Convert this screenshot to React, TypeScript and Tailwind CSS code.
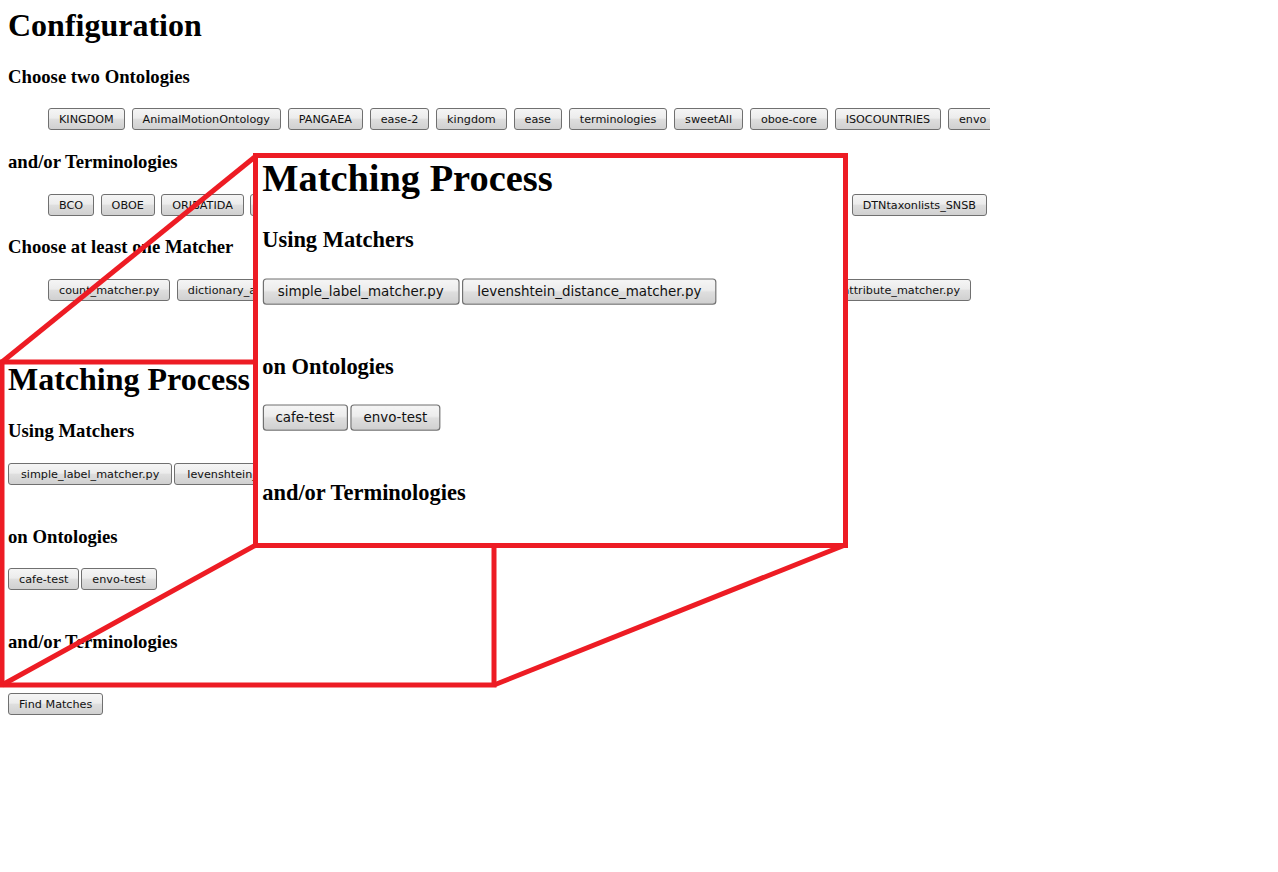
import React from "react";

const RED = "#ed1c24";

const ontologies = [
  "KINGDOM",
  "AnimalMotionOntology",
  "PANGAEA",
  "ease-2",
  "kingdom",
  "ease",
  "terminologies",
  "sweetAll",
  "oboe-core",
  "ISOCOUNTRIES",
  "envo",
];

const Button = ({ label, className = "" }: { label: string; className?: string }) => (
  <button
    className={`h-[22px] shrink-0 whitespace-nowrap rounded-[3px] border border-[#707070] bg-[linear-gradient(to_bottom,#f5f5f5_0%,#ececec_45%,#dedede_52%,#d0d0d0_100%)] px-[10px] pt-[1px] font-['DejaVu_Sans',sans-serif] text-[11.2px] leading-[19px] text-[#111] ${className}`}
  >
    {label}
  </button>
);

const H1 = ({ children }: { children: React.ReactNode }) => (
  <h1 className="text-[32px] font-bold leading-[37px]">{children}</h1>
);

const H3 = ({ children, className = "" }: { children: React.ReactNode; className?: string }) => (
  <h3 className={`text-[18.72px] font-bold leading-[22px] ${className}`}>{children}</h3>
);

const MatchingProcess = () => (
  <div className="h-[325px]">
    <H1>Matching Process</H1>
    <H3 className="mt-[22px]">Using Matchers</H3>
    <div className="mt-[21px] flex gap-[2px]">
      <Button label="simple_label_matcher.py" className="px-[12px]" />
      <Button label="levenshtein_distance_matcher.py" className="px-[12px]" />
    </div>
    <H3 className="mt-[41px]">on Ontologies</H3>
    <div className="mt-[20px] flex gap-[2px]">
      <Button label="cafe-test" />
      <Button label="envo-test" />
    </div>
    <H3 className="mt-[41px]">and/or Terminologies</H3>
  </div>
);

export default function App() {
  return (
    <div className="min-h-screen bg-white">
      <div className="relative h-[872px] w-[990px] overflow-hidden pl-2 pt-[7px] font-['Liberation_Serif',serif] text-black">
        <H1>Configuration</H1>

        <H3 className="mt-[22px]">Choose two Ontologies</H3>
        <div className="mt-[20px] flex gap-[6.8px] pl-10">
          {ontologies.map((o) => (
            <Button key={o} label={o} />
          ))}
        </div>

        <H3 className="mt-[21px]">and/or Terminologies</H3>
        <div className="mt-[21px] flex gap-[6.5px] pl-10 pr-[3px]">
          <Button label="BCO" />
          <Button label="OBOE" />
          <Button label="ORIBATIDA" />
          <Button label="SPECIES" />
          <Button label="DTNtaxonlists_SNSB" className="ml-auto" />
        </div>

        <H3 className="mt-[20px]">Choose at least one Matcher</H3>
        <div className="mt-[21px] flex gap-[6.5px] pl-10 pr-[19px]">
          <Button label="count_matcher.py" />
          <Button label="dictionary_annotation_matcher.py" />
          <Button label="label_attribute_matcher.py" className="ml-auto" />
        </div>

        <section className="mt-[60px]">
          <MatchingProcess />
        </section>

        <div className="mt-[7px] flex">
          <Button label="Find Matches" />
        </div>

        <svg className="pointer-events-none absolute left-0 top-0" width={990} height={872}>
          <rect x={2} y={362} width={492} height={323} fill="none" stroke={RED} strokeWidth={5} />
          <line x1={2} y1={362} x2={256} y2={156} stroke={RED} strokeWidth={5} />
          <line x1={2} y1={685} x2={256} y2={545} stroke={RED} strokeWidth={5} />
          <line x1={494} y1={685} x2={845} y2={545} stroke={RED} strokeWidth={5} />
        </svg>

        <div className="absolute left-[253px] top-[153px] h-[395px] w-[595px] overflow-hidden border-[5px] border-[#ed1c24] bg-white">
          <div className="origin-top-left scale-[1.2]">
            <div className="mt-[-2.5px] pl-[3.5px]">
              <MatchingProcess />
            </div>
          </div>
        </div>
      </div>
    </div>
  );
}
